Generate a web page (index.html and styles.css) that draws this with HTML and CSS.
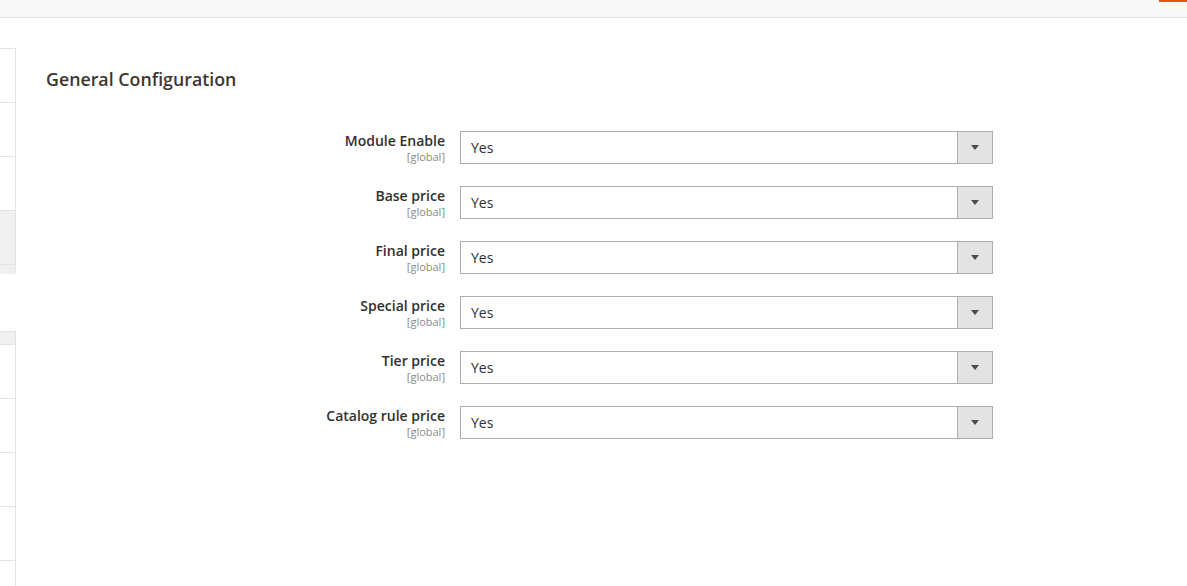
FILE: index.html
```html
<!DOCTYPE html>
<html>
<head>
<meta charset="utf-8">
<link rel="stylesheet" href="styles.css">
</head>
<body>
<div class="topbar"><span class="topbar-accent"></span></div>
<div class="page">
  <aside class="sidebar">
    <div class="side-block">
      <div class="side-item"></div>
      <div class="side-item"></div>
      <div class="side-item"></div>
      <div class="side-item side-item-active"></div>
      <div class="side-strip"></div>
    </div>
    <div class="side-block side-block-second">
      <div class="side-head"></div>
      <div class="side-item"></div>
      <div class="side-item"></div>
      <div class="side-item"></div>
      <div class="side-item"></div>
      <div class="side-item side-item-last"></div>
    </div>
  </aside>
  <main class="content">
    <h2 class="section-title">General Configuration</h2>
    <div class="form">
      <div class="field">
        <div class="label"><span class="label-text">Module Enable</span><span class="scope">[global]</span></div>
        <div class="select"><span class="select-value">Yes</span><span class="select-btn"><span class="arrow"></span></span></div>
      </div>
      <div class="field">
        <div class="label"><span class="label-text">Base price</span><span class="scope">[global]</span></div>
        <div class="select"><span class="select-value">Yes</span><span class="select-btn"><span class="arrow"></span></span></div>
      </div>
      <div class="field">
        <div class="label"><span class="label-text">Final price</span><span class="scope">[global]</span></div>
        <div class="select"><span class="select-value">Yes</span><span class="select-btn"><span class="arrow"></span></span></div>
      </div>
      <div class="field">
        <div class="label"><span class="label-text">Special price</span><span class="scope">[global]</span></div>
        <div class="select"><span class="select-value">Yes</span><span class="select-btn"><span class="arrow"></span></span></div>
      </div>
      <div class="field">
        <div class="label"><span class="label-text">Tier price</span><span class="scope">[global]</span></div>
        <div class="select"><span class="select-value">Yes</span><span class="select-btn"><span class="arrow"></span></span></div>
      </div>
      <div class="field">
        <div class="label"><span class="label-text">Catalog rule price</span><span class="scope">[global]</span></div>
        <div class="select"><span class="select-value">Yes</span><span class="select-btn"><span class="arrow"></span></span></div>
      </div>
    </div>
  </main>
</div>
</body>
</html>
```
FILE: styles.css
```css
html, body {
  margin: 0;
  padding: 0;
  background: #ffffff;
  font-family: "Open Sans", "Liberation Sans", sans-serif;
  color: #303030;
  overflow: hidden;
}
.topbar {
  height: 17px;
  background: #f8f8f8;
  border-bottom: 1px solid #e3e3e3;
  display: flex;
  justify-content: flex-end;
  align-items: flex-start;
}
.topbar-accent {
  width: 28px;
  height: 2px;
  background: #eb5202;
}
.page {
  display: flex;
  align-items: flex-start;
}
.sidebar {
  width: 16px;
  flex: none;
  padding-top: 30px;
}
.side-block {
  border-right: 1px solid #e3e3e3;
  box-sizing: border-box;
}
.side-block-second {
  margin-top: 57px;
}
.side-item {
  height: 53px;
  border-top: 1px solid #e3e3e3;
}
.side-item-active {
  background: #f0f0f0;
}
.side-item-last {
  height: 40px;
}
.side-strip {
  height: 9px;
  background: #f0f0f0;
  border-top: 1px solid #e3e3e3;
}
.side-head {
  height: 12px;
  background: #f0f0f0;
  border-top: 1px solid #e3e3e3;
}
.content {
  flex: 1;
  padding-left: 30px;
}
.section-title {
  margin: 50px 0 0 0;
  font-size: 17.8px;
  line-height: 22px;
  font-weight: 600;
  color: #41362f;
}
.form {
  margin-top: 41px;
  display: flex;
  flex-direction: column;
  gap: 22px;
}
.field {
  display: flex;
  align-items: flex-start;
}
.label {
  width: 399px;
  flex: none;
  display: flex;
  flex-direction: column;
  align-items: flex-end;
  padding-right: 15px;
}
.label-text {
  font-size: 14px;
  font-weight: 600;
  line-height: 19px;
  color: #303030;
}
.scope {
  font-size: 11px;
  line-height: 13px;
  color: #8a8a8a;
}
.select {
  width: 533px;
  height: 33px;
  box-sizing: border-box;
  border: 1px solid #adadad;
  display: flex;
  align-items: stretch;
  background: #ffffff;
}
.select-value {
  flex: 1;
  padding-left: 10px;
  font-size: 14px;
  line-height: 31px;
  color: #303030;
}
.select-btn {
  width: 34px;
  background: #e3e3e3;
  border-left: 1px solid #adadad;
  display: flex;
  align-items: center;
  justify-content: center;
}
.arrow {
  width: 0;
  height: 0;
  border-left: 4px solid transparent;
  border-right: 4px solid transparent;
  border-top: 5px solid #514943;
}
```
